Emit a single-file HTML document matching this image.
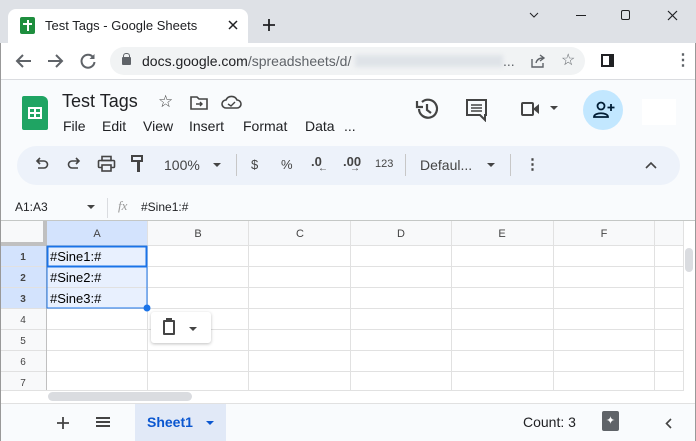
<!DOCTYPE html>
<html><head><style>
*{margin:0;padding:0;box-sizing:border-box}
body{width:696px;height:441px;overflow:hidden;font-family:"Liberation Sans",sans-serif;background:#fff;position:relative}
.a{position:absolute}
.t{color:#202124}
svg{position:absolute}
.m{position:absolute;top:118px;font-size:14px;color:#202124}
</style></head><body>
<div class="a" style="left:0;top:0;width:696px;height:43px;background:#dee1e6"></div>
<div class="a" style="left:8px;top:9px;width:240px;height:34px;background:#fff;border-radius:8px 8px 0 0"></div>
<div class="a" style="left:20px;top:17px;width:15px;height:17px;background:#1e8e3e;border-radius:2px"></div>
<div class="a" style="left:27px;top:20px;width:2px;height:11px;background:#fff"></div>
<div class="a" style="left:23px;top:23px;width:9px;height:2px;background:#fff"></div>
<div class="a t" style="left:45px;top:18px;font-size:13px">Test Tags - Google Sheets</div>
<svg style="left:228px;top:20px" width="10" height="10"><path d="M1 1L9 9M9 1L1 9" stroke="#202124" stroke-width="1.5"/></svg>
<svg style="left:262px;top:18px" width="14" height="14"><path d="M7 1V13M1 7H13" stroke="#202124" stroke-width="1.8"/></svg>
<svg style="left:529px;top:12px" width="10" height="7"><path d="M1 1L5 5L9 1" stroke="#202124" fill="none"/></svg>
<div class="a" style="left:576px;top:15px;width:10px;height:1px;background:#202124"></div>
<div class="a" style="left:621px;top:10px;width:9px;height:10px;border:1px solid #202124;border-radius:2px"></div>
<svg style="left:667px;top:10px" width="11" height="11"><path d="M1 1L10 10M10 1L1 10" stroke="#202124" stroke-width="1.2"/></svg>
<svg style="left:14px;top:53px" width="18" height="16"><path d="M17 8H3M9 2L3 8L9 14" stroke="#5f6368" stroke-width="2" fill="none"/></svg>
<svg style="left:47px;top:53px" width="18" height="16"><path d="M1 8H15M9 2L15 8L9 14" stroke="#5f6368" stroke-width="2" fill="none"/></svg>
<svg style="left:79px;top:52px" width="18" height="18"><path d="M14 5A6.5 6.5 0 1 0 15.5 10" stroke="#5f6368" stroke-width="2" fill="none"/><path d="M15.5 2V7H10.5Z" fill="#5f6368"/></svg>
<div class="a" style="left:110px;top:47px;width:475px;height:28px;background:#f1f3f4;border-radius:14px"></div>
<div class="a" style="left:122px;top:57px;width:9px;height:8px;background:#5f6368;border-radius:1px"></div>
<div class="a" style="left:123px;top:53px;width:7px;height:6px;border:1.5px solid #5f6368;border-bottom:none;border-radius:3px 3px 0 0"></div>
<div class="a" style="left:142px;top:53px;font-size:14px;color:#202124">docs.google.com<span style="color:#5f6368">/spreadsheets/d/</span></div>
<div class="a" style="left:355px;top:55px;width:148px;height:12px;background:#dfe3e8;filter:blur(2px)"></div>
<div class="a" style="left:503px;top:53px;font-size:14px;color:#5f6368">...</div>
<svg style="left:530px;top:53px" width="16" height="16"><path d="M2 6V14H13V10M6 10C7 6 10 5 13 5M10 2L14 5L10 8" stroke="#5f6368" stroke-width="1.4" fill="none"/></svg>
<div class="a" style="left:561px;top:50px;font-size:16px;color:#5f6368">☆</div>
<div class="a" style="left:601px;top:54px;width:13px;height:13px;border:2px solid #202124;border-right-width:5px"></div>
<div class="a" style="left:675px;top:50px;font-size:16px;color:#5f6368;font-weight:bold">⋮</div>
<div class="a" style="left:0;top:79px;width:696px;height:1px;background:#dadce0"></div>
<div class="a" style="left:0;top:80px;width:696px;height:140px;background:#f9fbfd"></div>
<div class="a" style="left:22px;top:96px;width:26px;height:34px;background:#1fa463;border-radius:2px 6px 2px 2px"></div>
<div class="a" style="left:28px;top:107px;width:14px;height:12px;border:2px solid #fff;background:linear-gradient(#fff,#fff) 50% 0/2px 100% no-repeat,linear-gradient(#fff,#fff) 0 50%/100% 2px no-repeat"></div>
<div class="a t" style="left:62px;top:91px;font-size:18px">Test Tags</div>
<div class="a" style="left:158px;top:92px;font-size:17px;color:#444">☆</div>
<svg style="left:190px;top:95px" width="18" height="16"><path d="M1 2H7L9 4H17V14H1Z" stroke="#444" stroke-width="1.6" fill="none"/><path d="M6 9H12M10 7L12 9L10 11" stroke="#444" stroke-width="1.4" fill="none"/></svg>
<svg style="left:221px;top:94px" width="21" height="16"><path d="M5 14A4 4 0 0 1 5 6A6 6 0 0 1 16 6A4 4 0 0 1 16 14Z" stroke="#444" stroke-width="1.6" fill="none"/><path d="M7 10L10 12L14 8" stroke="#444" stroke-width="1.4" fill="none"/></svg>
<div class="m" style="left:63px">File</div><div class="m" style="left:102px">Edit</div><div class="m" style="left:143px">View</div><div class="m" style="left:189px">Insert</div><div class="m" style="left:243px">Format</div><div class="m" style="left:305px">Data</div><div class="m" style="left:344px">...</div>
<svg style="left:414px;top:96px" width="26" height="26"><path d="M5 13A9 9 0 1 0 8 6" stroke="#444" stroke-width="2.2" fill="none"/><path d="M3 5V11H9" stroke="#444" stroke-width="2.2" fill="none"/><path d="M13 8V14L17 17" stroke="#444" stroke-width="2.2" fill="none"/></svg>
<svg style="left:465px;top:98px" width="24" height="24"><path d="M2 2H21V17H20V22L15 17H2Z" stroke="#444" stroke-width="2" fill="none"/><path d="M6 7H17M6 10H17M6 13H17" stroke="#444" stroke-width="1.6"/></svg>
<div class="a" style="left:521px;top:102px;width:13px;height:14px;border:2px solid #444;border-radius:2px"></div>
<div class="a" style="left:533px;top:104px;width:0;height:0;border-top:5px solid transparent;border-bottom:5px solid transparent;border-right:6px solid #444"></div>
<div class="a" style="left:550px;top:106px;border-left:4px solid transparent;border-right:4px solid transparent;border-top:4px solid #444"></div>
<div class="a" style="left:583px;top:90px;width:40px;height:40px;background:#c2e7ff;border-radius:50%"></div>
<svg style="left:593px;top:100px" width="22" height="20"><circle cx="8" cy="6" r="3.5" stroke="#001d35" stroke-width="1.8" fill="none"/><path d="M1 17C1 12 15 12 15 17Z" stroke="#001d35" stroke-width="1.8" fill="none"/><path d="M18 4V11M14.5 7.5H21.5" stroke="#001d35" stroke-width="1.8"/></svg>
<div class="a" style="left:642px;top:99px;width:34px;height:26px;background:#fff"></div>
<div class="a" style="left:17px;top:146px;width:663px;height:39px;background:#edf2fa;border-radius:20px"></div>
<svg style="left:34px;top:157px" width="16" height="16"><path d="M4 11H10A3.5 3.5 0 0 0 10 4H3M6 1L3 4L6 7" stroke="#444" stroke-width="1.6" fill="none"/></svg>
<svg style="left:66px;top:157px" width="16" height="16"><path d="M12 11H6A3.5 3.5 0 0 1 6 4H13M10 1L13 4L10 7" stroke="#444" stroke-width="1.6" fill="none"/></svg>
<svg style="left:97px;top:155px" width="20" height="18"><rect x="5" y="1.5" width="9" height="4" stroke="#444" stroke-width="1.6" fill="none"/><rect x="1.5" y="5.5" width="16" height="7" rx="1" stroke="#444" stroke-width="1.6" fill="none"/><rect x="5" y="10" width="9" height="6" stroke="#444" stroke-width="1.6" fill="#edf2fa"/></svg>
<div class="a" style="left:131px;top:155px;width:12px;height:7px;border:2px solid #444"></div>
<div class="a" style="left:137px;top:162px;width:3px;height:10px;background:#444"></div>
<div class="a" style="left:164px;top:157px;font-size:14px;color:#444">100%</div>
<div class="a" style="left:213px;top:163px;border-left:4px solid transparent;border-right:4px solid transparent;border-top:4px solid #444"></div>
<div class="a" style="left:236px;top:154px;width:1px;height:22px;background:#c7c7c7"></div>
<div class="a" style="left:251px;top:157px;font-size:13px;color:#444">$</div>
<div class="a" style="left:281px;top:157px;font-size:13px;color:#444">%</div>
<div class="a" style="left:311px;top:154px;font-size:13px;color:#444;font-weight:bold">.0</div>
<div class="a" style="left:318px;top:163px;font-size:10px;color:#444">←</div>
<div class="a" style="left:343px;top:154px;font-size:13px;color:#444;font-weight:bold">.00</div>
<div class="a" style="left:350px;top:163px;font-size:10px;color:#444">→</div>
<div class="a" style="left:375px;top:158px;font-size:11px;color:#444">123</div>
<div class="a" style="left:405px;top:154px;width:1px;height:22px;background:#c7c7c7"></div>
<div class="a" style="left:420px;top:157px;font-size:14px;color:#444">Defaul...</div>
<div class="a" style="left:487px;top:163px;border-left:4px solid transparent;border-right:4px solid transparent;border-top:4px solid #444"></div>
<div class="a" style="left:510px;top:154px;width:1px;height:22px;background:#c7c7c7"></div>
<div class="a" style="left:525px;top:155px;font-size:15px;color:#444;font-weight:bold">⋮</div>
<svg style="left:645px;top:161px" width="12" height="8"><path d="M1 7L6 2L11 7" stroke="#444" stroke-width="1.6" fill="none"/></svg>
<div class="a t" style="left:15px;top:200px;font-size:12px">A1:A3</div>
<div class="a" style="left:87px;top:205px;border-left:4px solid transparent;border-right:4px solid transparent;border-top:4px solid #444"></div>
<div class="a" style="left:107px;top:198px;width:1px;height:20px;background:#dadce0"></div>
<div class="a" style="left:118px;top:198px;font-size:13px;color:#999;font-style:italic;font-family:'Liberation Serif',serif">fx</div>
<div class="a t" style="left:141px;top:200px;font-size:12px">#Sine1:#</div>
<div class="a" style="left:0;top:220px;width:696px;height:1px;background:#c4c7c5"></div>
<svg style="left:0;top:221px" width="696" height="170">
<rect x="0" y="0" width="696" height="170" fill="#fff"/>
<rect x="0" y="0" width="683" height="24" fill="#f8f9fa"/>
<rect x="0" y="0" width="46" height="170" fill="#f8f9fa"/>
<rect x="47" y="0" width="100" height="24" fill="#d3e3fd"/>
<rect x="0" y="25" width="46" height="62" fill="#d3e3fd"/>
<rect x="47" y="25" width="100" height="62" fill="#e8f0fe"/>
<g stroke="#e1e1e1" stroke-width="1">
<line x1="0" y1="24.5" x2="683" y2="24.5"/><line x1="0" y1="45.5" x2="683" y2="45.5"/><line x1="0" y1="66.5" x2="683" y2="66.5"/><line x1="0" y1="87.5" x2="683" y2="87.5"/><line x1="0" y1="108.5" x2="683" y2="108.5"/><line x1="0" y1="129.5" x2="683" y2="129.5"/><line x1="0" y1="150.5" x2="683" y2="150.5"/>
<line x1="147.5" y1="0" x2="147.5" y2="170"/><line x1="248.5" y1="0" x2="248.5" y2="170"/><line x1="350.5" y1="0" x2="350.5" y2="170"/><line x1="451.5" y1="0" x2="451.5" y2="170"/><line x1="553.5" y1="0" x2="553.5" y2="170"/><line x1="654.5" y1="0" x2="654.5" y2="170"/><line x1="683.5" y1="0" x2="683.5" y2="170"/>
</g>
<rect x="0" y="0" width="46" height="24" fill="#f8f9fa"/>
<rect x="43" y="0" width="4" height="24" fill="#c0c0c0"/>
<rect x="0" y="21" width="47" height="4" fill="#c0c0c0"/>
<line x1="46.5" y1="0" x2="46.5" y2="170" stroke="#c0c0c0"/>
<rect x="47.5" y="25.5" width="99" height="20" fill="none" stroke="#1a73e8" stroke-width="2"/>
<rect x="47" y="25" width="100" height="62" fill="none" stroke="#1a73e8" stroke-width="1"/>
<circle cx="147" cy="87" r="3.5" fill="#1a73e8"/>
<rect x="684" y="20" width="12" height="150" fill="#fff"/>
<rect x="685" y="27" width="8" height="24" rx="4" fill="#dadce0"/>
<g font-family="Liberation Sans" font-size="11" fill="#444" text-anchor="middle">
<text x="97" y="16">A</text><text x="198" y="16">B</text><text x="300" y="16">C</text><text x="401" y="16">D</text><text x="502" y="16">E</text><text x="604" y="16">F</text>
<text x="23" y="39" font-weight="bold" font-size="10">1</text><text x="23" y="60" font-weight="bold" font-size="10">2</text><text x="23" y="81" font-weight="bold" font-size="10">3</text>
<text x="23" y="102" font-size="10">4</text><text x="23" y="123" font-size="10">5</text><text x="23" y="144" font-size="10">6</text><text x="23" y="165" font-size="10">7</text>
</g>
<g font-family="Liberation Sans" font-size="13" fill="#000">
<text x="50" y="40">#Sine1:#</text><text x="50" y="61">#Sine2:#</text><text x="50" y="82">#Sine3:#</text>
</g>
</svg>
<div class="a" style="left:151px;top:312px;width:60px;height:31px;background:#fff;border-radius:3px;box-shadow:0 1px 3px rgba(0,0,0,.25)"></div>
<div class="a" style="left:163px;top:320px;width:12px;height:15px;border:2px solid #444;border-radius:1px"></div>
<div class="a" style="left:166px;top:318px;width:6px;height:4px;background:#444"></div>
<div class="a" style="left:189px;top:327px;border-left:4px solid transparent;border-right:4px solid transparent;border-top:4px solid #444"></div>
<div class="a" style="left:0;top:390px;width:684px;height:13px;background:#fff;border-top:1px solid #e1e1e1"></div>
<div class="a" style="left:48px;top:392px;width:144px;height:9px;background:#dadce0;border-radius:5px"></div>
<div class="a" style="left:0;top:403px;width:696px;height:38px;background:#f9fbfd;border-top:1px solid #e1e1e1"></div>
<svg style="left:57px;top:417px" width="12" height="12"><path d="M6 0V12M0 6H12" stroke="#444" stroke-width="1.8"/></svg>
<div class="a" style="left:96px;top:417px;width:14px;height:10px;border-top:2px solid #444;border-bottom:2px solid #444"></div>
<div class="a" style="left:96px;top:421px;width:14px;height:2px;background:#444"></div>
<div class="a" style="left:135px;top:404px;width:91px;height:37px;background:#e1e9f7"></div>
<div class="a" style="left:147px;top:414px;font-size:14px;color:#0b57d0;font-weight:bold">Sheet1</div>
<div class="a" style="left:206px;top:421px;border-left:4px solid transparent;border-right:4px solid transparent;border-top:4px solid #0b57d0"></div>
<div class="a t" style="left:523px;top:414px;font-size:14px">Count: 3</div>
<div class="a" style="left:602px;top:411px;width:17px;height:20px;background:#5f6368;border-radius:2px;color:#fff;font-size:11px;text-align:center;line-height:20px">✦</div>
<svg style="left:665px;top:418px" width="7" height="11"><path d="M6 1L1.5 5.5L6 10" stroke="#444" stroke-width="1.6" fill="none"/></svg>
<div class="a" style="left:0;top:43px;width:1px;height:398px;background:#999"></div>
<div class="a" style="left:695px;top:43px;width:1px;height:398px;background:#999"></div>
</body></html>
